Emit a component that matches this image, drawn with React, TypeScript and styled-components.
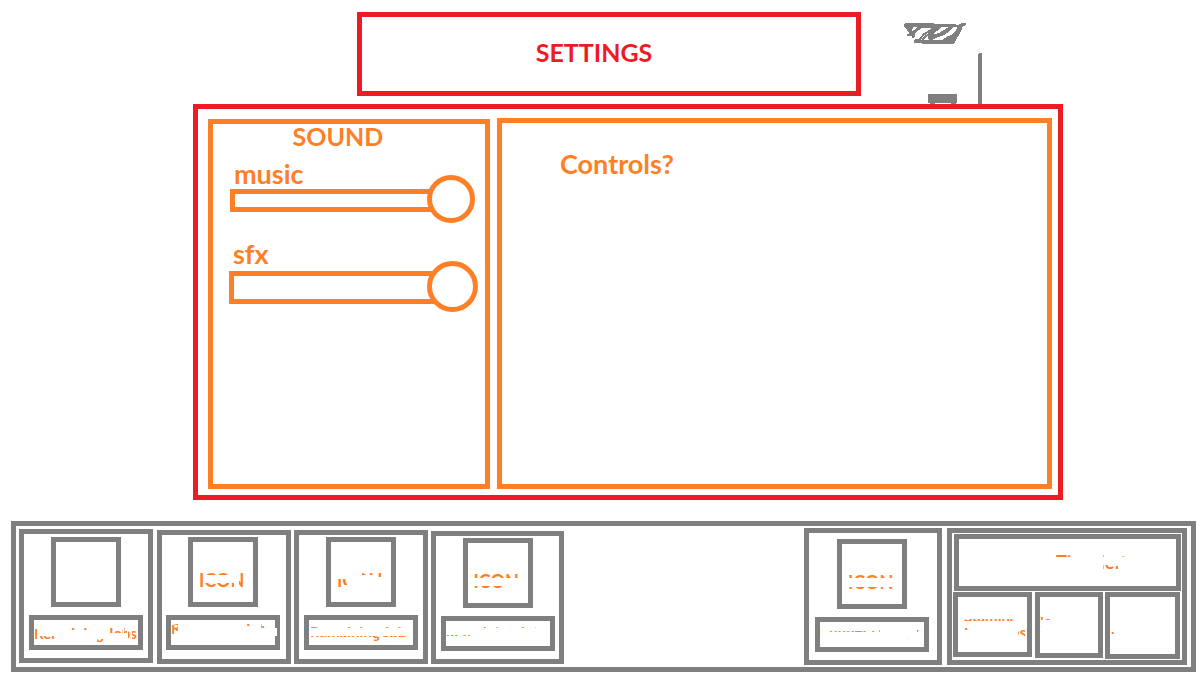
import React from "react";
import styled, { createGlobalStyle } from "styled-components";

const RED = "#ed1c24";
const ORANGE = "#ff7f27";
const GRAY = "#7f7f7f";

const GlobalStyle = createGlobalStyle`
  *, *::before, *::after { box-sizing: border-box; }
  body {
    margin: 0;
    background: #fff;
    font-family: Lato, "Open Sans", sans-serif;
    font-weight: 700;
    color: ${ORANGE};
  }
  h1, h2, p { margin: 0; font: inherit; }
`;

const Page = styled.div`
  display: flex;
  flex-direction: column;
`;

const Header = styled.header`
  display: grid;
  grid-template-columns: 357fr 504fr 339fr;
`;

const TitleBox = styled.div`
  grid-column: 2;
  display: flex;
  align-items: center;
  justify-content: center;
  min-height: 84px;
  margin: 12px 0 8px;
  padding: 0 30px 4px 0;
  border: 5px solid ${RED};
`;

const Title = styled.h1`
  color: ${RED};
  font-size: 25px;
  line-height: 30px;
`;

const Doodle = styled.svg`
  display: block;
  margin-left: 39px;
`;

const Middle = styled.main`
  display: grid;
  grid-template-columns: 193fr 870fr 137fr;
`;

const SettingsFrame = styled.div`
  grid-column: 2;
  display: grid;
  grid-template-columns: 282fr 555fr;
  column-gap: 7px;
  min-height: 396px;
  padding: 9px 6px 6px 10px;
  border: 5px solid ${RED};
`;

const Panel = styled.section<{ $top?: number }>`
  margin-top: ${(p) => p.$top ?? 0}px;
  border: 5px solid ${ORANGE};
`;

const SoundHeading = styled.h2`
  padding-right: 22px;
  font-size: 25px;
  line-height: 24px;
  text-align: center;
`;

const ControlsHeading = styled.h2`
  padding: 29px 0 0 58px;
  font-size: 27px;
  line-height: 24px;
`;

const Field = styled.div<{ $gap: number; $left: number; $right: number }>`
  display: flex;
  flex-direction: column;
  padding: 0 ${(p) => p.$right}px 0 ${(p) => p.$left}px;
  margin-top: ${(p) => p.$gap}px;
`;

const FieldLabel = styled.label`
  padding-left: 4px;
  font-size: 27px;
  line-height: 24px;
`;

const Slider = styled.input<{ $knob: number; $bar: number; $barTop: number; $lift: number }>`
  appearance: none;
  width: 100%;
  height: ${(p) => p.$knob}px;
  margin: -${(p) => p.$lift}px 0 0;
  background:
    linear-gradient(#fff, #fff) 5px ${(p) => p.$barTop + 5}px / calc(100% - 30px) ${(p) => p.$bar - 10}px no-repeat,
    linear-gradient(${ORANGE}, ${ORANGE}) left ${(p) => p.$barTop}px / calc(100% - 24px) ${(p) => p.$bar}px no-repeat;

  &::-webkit-slider-runnable-track {
    height: ${(p) => p.$knob}px;
    background: transparent;
  }
  &::-webkit-slider-thumb {
    appearance: none;
    width: ${(p) => p.$knob}px;
    height: ${(p) => p.$knob}px;
    border: 5px solid ${ORANGE};
    border-radius: 50%;
    background: #fff;
  }
`;

const Dock = styled.footer`
  display: flex;
  align-items: flex-start;
  min-height: 151px;
  margin: 21px 4px 3px 11px;
  padding: 0 4px 0 3px;
  border: 5px solid ${GRAY};
`;

const Card = styled.div<{ $w: number; $h: number; $drop: number; $gap: number; $pad: number; $right: number }>`
  display: flex;
  flex-direction: column;
  align-items: center;
  gap: 8px;
  flex: 0 1 ${(p) => p.$w}px;
  height: ${(p) => p.$h}px;
  margin: ${(p) => p.$drop}px ${(p) => p.$gap}px 0 0;
  padding: ${(p) => p.$pad}px ${(p) => p.$right}px 0 0;
  border: 5px solid ${GRAY};
`;

const Spacer = styled.div`
  flex: 1;
`;

const Box = styled.div<{ $w?: number; $h: number }>`
  position: relative;
  width: ${(p) => (p.$w ? `${p.$w}px` : "auto")};
  height: ${(p) => p.$h}px;
  border: 5px solid ${GRAY};
`;

const Nick = styled.span`
  position: absolute;
  left: 100%;
  top: 8px;
  width: 2px;
  height: 8px;
  background: #fff;
`;

const Worn = styled.p<{ $size: number; $line: number; $x: number; $y: number; $clip: string }>`
  height: 100%;
  padding: ${(p) => p.$y}px 0 0 ${(p) => p.$x}px;
  font-size: ${(p) => p.$size}px;
  line-height: ${(p) => p.$line}px;
  white-space: pre;
  clip-path: path("${(p) => p.$clip}");
`;

const Stats = styled.div`
  flex: 0 1 240px;
  height: 137px;
  margin-top: 2px;
  padding: 1px 1px 0 1px;
  border: 5px solid ${GRAY};
`;

const TimeSlot = styled.div`
  margin: 0 0 1px 1px;
`;

const StatRow = styled.div`
  display: grid;
  grid-template-columns: minmax(0, 79fr) 3px minmax(0, 68fr) 2px minmax(0, 75fr);
  align-items: start;
  margin-right: 1px;

  & > :nth-child(2) { grid-column: 3; }
  & > :nth-child(3) { grid-column: 5; }
`;

type Patch = [x: number, y: number, w: number, h: number];

/* Lettering that has been partly rubbed out: only the patches still show. */
function WornText(props: { text: string; patches: Patch[]; x: number; y: number; big?: boolean }) {
  const clip = props.patches.map(([x, y, w, h]) => `M${x} ${y}h${w}v${h}h${-w}z`).join("");
  return (
    <Worn $size={props.big ? 18 : 15} $line={props.big ? 20 : 16} $x={props.x} $y={props.y} $clip={clip}>
      {props.text}
    </Worn>
  );
}

interface CardData {
  w: number;
  h: number;
  drop: number;
  gap: number;
  pad: number;
  right?: number;
  icon: Patch[];
  label: string;
  labelX: number;
  labelY: number;
  patches: Patch[];
  nick?: boolean;
}

const cards: CardData[] = [
  {
    w: 134, h: 134, drop: 3, gap: 4, pad: 3, icon: [],
    label: "Remaining Jobs", labelX: 0, labelY: 5,
    patches: [
      [0, 9, 3, 10], [4, 16, 17, 3], [37, 7, 4, 3], [50, 7, 4, 3], [63, 19, 8, 4],
      [76, 8, 4, 5], [81, 10, 8, 3], [90, 7, 3, 6], [94, 11, 3, 8], [98, 10, 7, 10],
    ],
  },
  {
    w: 134, h: 134, drop: 4, gap: 3, pad: 2, right: 2,
    icon: [[6, 31, 5, 15], [11, 31, 27, 2], [11, 41, 30, 5], [46, 31, 5, 15]],
    label: "Remaining Jobs", labelX: -1, labelY: 2,
    patches: [[0, 5, 3, 11], [3, 4, 4, 7], [5, 14, 2, 2], [76, 4, 3, 2], [90, 4, 3, 4]],
    nick: true,
  },
  {
    w: 134, h: 134, drop: 4, gap: 3, pad: 2,
    icon: [[6, 37, 6, 9], [12, 37, 4, 6], [31, 31, 12, 2], [46, 31, 5, 4]],
    label: "Remaining Jobs", labelX: 1, labelY: 4,
    patches: [[2, 6, 96, 2], [2, 16, 96, 1], [65, 16, 7, 5]],
  },
  {
    w: 133, h: 133, drop: 5, gap: 0, pad: 2,
    icon: [[6, 31, 46, 4], [6, 43, 29, 3]],
    label: "Remaining Jobs", labelX: 0, labelY: 3,
    patches: [[1, 4, 6, 2], [38, 4, 4, 3], [51, 4, 4, 3], [76, 4, 4, 3], [90, 4, 4, 3], [1, 14, 24, 1]],
  },
];

const bonusCard: CardData = {
  w: 138, h: 137, drop: 2, gap: 5, pad: 6, right: 2,
  icon: [[7, 31, 44, 3], [7, 43, 44, 3]],
  label: "Runner core (crew)", labelX: -1, labelY: 3,
  patches: [[0, 6, 1, 10], [9, 9, 45, 1], [57, 8, 3, 2], [57, 18, 3, 2], [69, 16, 21, 1], [97, 8, 4, 2], [97, 17, 4, 2]],
};

function JobCard({ c }: { c: CardData }) {
  return (
    <Card $w={c.w} $h={c.h} $drop={c.drop} $gap={c.gap} $pad={c.pad} $right={c.right ?? 0}>
      <Box $w={70} $h={70}>
        {c.icon.length > 0 && <WornText big text="ICON" x={6} y={28} patches={c.icon} />}
      </Box>
      <Box $w={114} $h={35}>
        <WornText text={c.label} x={c.labelX} y={c.labelY} patches={c.patches} />
        {c.nick && <Nick />}
      </Box>
    </Card>
  );
}

export default function App() {
  return (
    <>
      <GlobalStyle />
      <Page>
        <Header>
          <TitleBox>
            <Title>SETTINGS</Title>
          </TitleBox>
          <Doodle width="90" height="104" viewBox="0 0 90 104" fill={GRAY} aria-hidden="true" shapeRendering="crispEdges">
            <g transform="translate(0 18) scale(0.3333)">
              <path d="M12 18L18 15H102V18H165L172 22L185 15H197V22L188 26L180 46L168 66L162 77H66V74H42L40 68L50 62L44 58L38 60L36 55H20V50L27 46L19 32L12 26Z" />
              <path
                fill="#fff"
                d="M38 28H53L37 40ZM66 29H98L84 38L70 46L58 62L44 62L40 52L48 42ZM108 28L118 28L98 42L88 54L86 66H62L70 54L90 42ZM122 28H144L128 38L112 50L94 60L90 54L108 42ZM150 28H172L165 42L152 52L140 56L126 67H92L108 60L130 52L148 40Z"
              />
              <path d="M84 56L116 26L124 28L98 50L118 44L150 26L158 28L146 42L122 54L100 60L84 62Z" />
              <path d="M64 64L72 56L100 34L108 26L116 28L98 46L78 58L72 66ZM60 28L66 28L46 46L44 56L37 55L42 45Z" />
            </g>
            <path d="M79 53H82V104H78V54H79ZM28 94H57V103H56V104H51V103H35V104H30V103H28Z" />
          </Doodle>
        </Header>

        <Middle>
          <SettingsFrame>
            <Panel $top={1}>
              <SoundHeading>SOUND</SoundHeading>
              <Field $gap={14} $left={17} $right={10}>
                <FieldLabel htmlFor="music">music</FieldLabel>
                <Slider id="music" type="range" defaultValue={100} $knob={48} $bar={23} $barTop={14} $lift={11} />
              </Field>
              <Field $gap={19} $left={16} $right={7}>
                <FieldLabel htmlFor="sfx">sfx</FieldLabel>
                <Slider id="sfx" type="range" defaultValue={100} $knob={51} $bar={33} $barTop={10} $lift={5} />
              </Field>
            </Panel>
            <Panel>
              <ControlsHeading>Controls?</ControlsHeading>
            </Panel>
          </SettingsFrame>
        </Middle>

        <Dock>
          {cards.map((c, i) => (
            <JobCard key={i} c={c} />
          ))}
          <Spacer />
          <JobCard c={bonusCard} />
          <Stats>
            <TimeSlot>
              <Box $h={57}>
                <WornText
                  big
                  text="Time left"
                  x={97}
                  y={13}
                  patches={[[97, 15, 15, 3], [144, 15, 5, 3], [162, 14, 11, 4], [136, 28, 2, 2], [144, 26, 5, 4], [149, 27, 10, 3]]}
                />
              </Box>
            </TimeSlot>
            <StatRow>
              <Box $h={65}>
                <WornText
                  text={"Stamina\nIncreases"}
                  x={6}
                  y={11}
                  patches={[[6, 22, 50, 2], [6, 31, 11, 2], [60, 31, 7, 8]]}
                />
              </Box>
              <Box $h={66}>
                <WornText
                  text={"Late runs\nleft"}
                  x={-1}
                  y={9}
                  patches={[[0, 14, 1, 8], [1, 20, 9, 3], [30, 14, 15, 2], [54, 14, 7, 9], [0, 29, 1, 8]]}
                />
              </Box>
              <Box $h={67}>
                <WornText text="." x={1} y={23} patches={[[1, 35, 3, 3]]} />
              </Box>
            </StatRow>
          </Stats>
        </Dock>
      </Page>
    </>
  );
}
